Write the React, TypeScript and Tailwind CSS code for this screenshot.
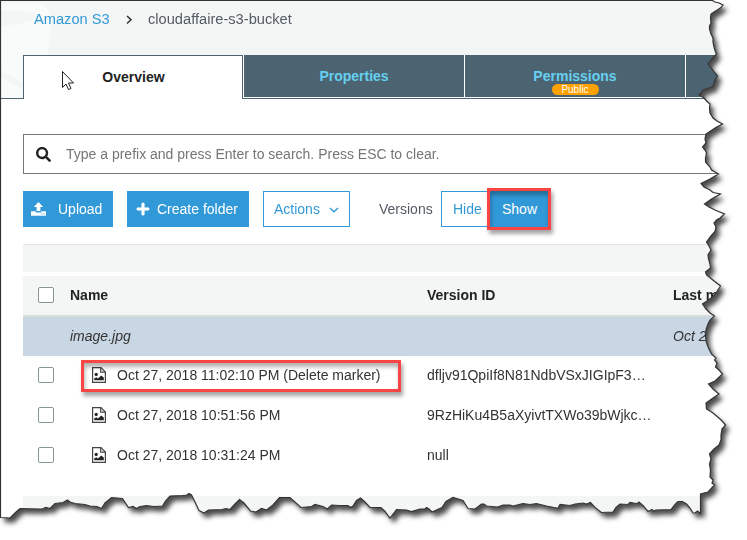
import React from 'react';
import { FaSearch, FaPlus } from 'react-icons/fa';

const OUTLINE =
  '0.5,0.5 712.5,0.5 715,2 719,3 723,5 721,7.5 718,9.5 714,12 711,14 710.5,18 711,23 709.5,26 709.5,29 711,34 713,38 713,42 714,47 715.5,52 716.5,54 712,59 708,64 712,69 715,73 717.5,76 715,80 714,84 712,87 703,90 701,93 699,95 704,98 706.5,101 710,104 709.5,108 710,113 713,118 717,121 722.5,124 715,128 706,134 705,139 706,143 702.5,147 705,150 706.5,153 705.5,158 705.5,162 710,167 711.5,170 718.5,174 710,179 701,183.5 704,187 710,190 713,192.5 720.5,194 711.5,199 704.5,204 709,207 715,210 724.5,214 720,218 716.5,220 714,223 716,227 715,231.5 711,236 706.5,242 709,246 711,250 708,255 708.5,259 710,264 710.5,268 705.5,272 706.5,275 714,281 720.5,286 716.5,292 712.5,297 707,301 702.5,304 706,309 710,313 714.5,316 710,320 708,324 706,330 705.5,335 706,341 708.5,348 711.5,354 716,358 714.5,360 717,363 715.5,367 719,370 722.5,374 715,381 708.5,384 713,389 719,394 713,398 706,403 706.5,409 713,413 720,419 723,422 725.5,425 722,429 721,435 721,440 719,445 714,449 709.5,454 711,459 709.5,464 710.5,470 710,477 713,480 712,483 714.5,485 708,492 700.5,494 700.5,513.5 697.5,511 695,513 693,513 690,508 686.5,504 682.5,501.5 678,501.5 675,504.5 671,509.5 655.5,510 654,511.5 652,509.5 648,511.5 643,505.5 639,502 638,503 636,503.5 630,502.5 628,504.5 620,504 616,507.5 613,512 601.5,512.5 595,507.5 590.5,502.5 586.5,504 583,503 575,504 570,505.5 560,504.5 558,508 556.5,508 546.5,506 536.5,503.5 530,504.5 523,503.5 513,506 510,505 503,505 497.5,507 486.5,506 484,504 481.5,504 475,509 468,508.5 463,500.5 460,499.5 453,497.5 446,501.5 442,507.5 432,512 429,509 426.5,507.5 425,509 420,509 411.5,511.5 406.5,510 396.5,509.5 390,518 385,511.5 381,507.5 370,507.5 365,502 360.5,498 356.5,500.5 353,506 350.5,507.5 348,505.5 340,505.5 331.5,505 327.5,509 323,506.5 315,504.5 311.5,506.5 301,507.5 290,497.5 279.5,497.5 273,505 266.5,510 261.5,508.5 256,512 250.5,511 244,503 239.5,499.5 235,504 230,509.5 226,508.5 222,509.5 208.5,510 204,513 199,510.5 195,502 191.5,495 189,493.5 187,495 183,495.5 170,496 165.5,501 162.5,506 154,506.5 146.5,505.5 140,506.5 136.5,508.5 133,506.5 128.5,507.5 122.5,498.5 111.5,497.5 105,503 101.5,508.5 97,506.5 90,506 85,504.5 75,503.5 70,502 67.5,500 63,502.5 55,503.5 50,508.5 46,507.5 42,509 20,508.5 15,513 10,518 0.5,517.5';

const CLIP = `polygon(${OUTLINE.split(' ')
  .map((p) => p.split(',').map((n) => `${n}px`).join(' '))
  .join(',')})`;

function Checkbox() {
  return <span className="block size-4 shrink-0 rounded-[2px] border border-[#879596] bg-white" />;
}

function ImageFileIcon() {
  return (
    <svg width="14" height="16" viewBox="0 0 14 16" className="shrink-0" fill="none">
      <path d="M0.6 0.6H9L13.4 5V15.4H0.6Z" fill="#fff" stroke="#444" strokeWidth="1.2" />
      <path d="M8.7 0.8V5.2H13.2" stroke="#444" strokeWidth="1.2" />
      <circle cx="4.2" cy="7.4" r="1.6" fill="#222" />
      <path d="M2.2 13.3V11.5L4.3 10.2L6 11.4L9.2 8.6L11.8 10.6V13.3Z" fill="#222" />
    </svg>
  );
}

function UploadIcon() {
  return (
    <svg width="15" height="14" viewBox="0 0 15 14" fill="#fff">
      <path d="M7.5 0L12.2 4.9H9.4V9H5.6V4.9H2.8Z" />
      <path fillRule="evenodd" d="M0.5 9.2H4.8V10.4H10.2V9.2H14.5Q15 9.2 15 9.8V13.3Q15 13.8 14.5 13.8H0.5Q0 13.8 0 13.3V9.8Q0 9.2 0.5 9.2ZM10.2 11.6V12.6H11.2V11.6ZM12.5 11.6V12.6H13.5V11.6Z" />
    </svg>
  );
}

function PlusIcon() {
  return <FaPlus size={14} className="shrink-0" stroke="#fff" strokeWidth={20} />;
}

const rows = [
  { date: 'Oct 27, 2018 11:02:10 PM (Delete marker)', id: 'dfljv91QpiIf8N81NdbVSxJIGIpF3…', marked: true },
  { date: 'Oct 27, 2018 10:51:56 PM', id: '9RzHiKu4B5aXyivtTXWo39bWjkc…', marked: false },
  { date: 'Oct 27, 2018 10:31:24 PM', id: 'null', marked: false },
];

const highlight =
  'pointer-events-none absolute border-[3px] border-[#fb4545] shadow-[2px_4px_4px_rgba(0,0,0,0.35),inset_1px_4px_4px_rgba(0,0,0,0.3)]';

export default function App() {
  return (
    <div className="relative h-[540px] w-[747px] overflow-hidden bg-white font-['Liberation_Sans',Arial,sans-serif] text-[14px] text-[#333]">
      <div className="h-full w-full drop-shadow-[4px_5px_2.5px_rgba(0,0,0,0.7)]">
        <div className="flex h-full w-full flex-col overflow-hidden bg-white" style={{ clipPath: CLIP }}>
          <header className="relative h-[99px] shrink-0 bg-[#f4f6f6]">
            <svg width="60" height="98" viewBox="0 0 60 98" className="absolute left-0 top-0">
              <path d="M0 3H42Q51 8 51 22L43 98H0Z" fill="#f9fafa" />
              <path d="M0 11Q26 9 40 15Q30 24 0 26Z" fill="#f4f6f6" />
              <path d="M0 70L24 84V90L0 77Z" fill="#f4f6f6" />
            </svg>
            <div className="relative flex h-[55px] items-start pl-[34px] pt-[9px] text-[14.65px] leading-5">
              <span className="w-[76px] whitespace-nowrap text-[#3199d8]">Amazon S3</span>
              <svg width="6" height="10" viewBox="0 0 6 10" className="ml-4 mt-[6px]" fill="none">
                <path d="M1 1L5 4.7L1 8.5" stroke="#333" strokeWidth="1.5" />
              </svg>
              <span className="ml-4 whitespace-nowrap text-[#545b64]">cloudaffaire-s3-bucket</span>
            </div>
            <div className="relative flex h-11 text-[14px] font-bold">
              <div className="w-[23px] border-b border-[#4c6472]" />
              <div className="flex w-[220px] justify-center border border-b-0 border-[#4c6472] bg-white pl-px pt-[11px] leading-5 text-[#222]">
                Overview
              </div>
              <div className="flex flex-1 gap-px border-b border-[#4c6472] bg-white pb-px pl-px leading-5 text-[#66d0f0]">
                <div className="flex w-[220px] justify-center bg-[#4c6472] pt-[11px]">Properties</div>
                <div className="flex w-[220px] flex-col items-center bg-[#4c6472] pt-[11px]">
                  <span>Permissions</span>
                  <span className="-mt-[2px] flex h-[11px] w-[47px] shrink-0 items-center justify-center rounded-full bg-[#ffa100] text-[10px] font-normal leading-none text-white">
                    Public
                  </span>
                </div>
                <div className="flex-1 bg-[#4c6472]" />
              </div>
            </div>
          </header>

          <main className="flex flex-1 flex-col pl-[23px] pt-[35px]">
            <div className="flex h-10 shrink-0 items-center border border-r-0 border-[#777] pl-3">
              <FaSearch size={15} color="#222" />
              <span className="ml-[15px] text-[14px] text-[#757575]">
                Type a prefix and press Enter to search. Press ESC to clear.
              </span>
            </div>

            <div className="mt-[17px] flex h-9 shrink-0 items-center text-[14px] text-white">
              <div className="flex h-9 w-[90px] items-center bg-[#3199d8] pl-2">
                <UploadIcon />
                <span className="ml-3">Upload</span>
              </div>
              <div className="ml-[14px] flex h-9 w-[122px] items-center whitespace-nowrap bg-[#3199d8] pl-[9px]">
                <PlusIcon />
                <span className="ml-[7px]">Create folder</span>
              </div>
              <div className="ml-[14px] flex h-9 w-[87px] items-center border border-[#3199d8] pl-[10px] text-[#3199d8]">
                <span>Actions</span>
                <svg width="10" height="6" viewBox="0 0 10 6" className="ml-[9px] mt-px" fill="none">
                  <path d="M1 1L5 4.8L9 1" stroke="#3199d8" strokeWidth="1.4" />
                </svg>
              </div>
              <span className="ml-[29px] w-[62px] text-[#545b64]">Versions</span>
              <div className="flex h-9 w-[49px] items-center border border-r-0 border-[#3199d8] pl-[11px] text-[#3199d8]">
                Hide
              </div>
              <div className="relative flex h-9 w-[59px] items-center justify-center bg-[#3199d8]">
                Show
                <span className={`${highlight} -left-[3px] -top-[3px] h-[42px] w-[64px]`} />
              </div>
            </div>

            <div className="mt-[17px] h-7 shrink-0 border-t border-[#dfe3e3] bg-[#f4f6f6]" />
            <div className="mt-1 flex h-[41px] shrink-0 items-center border-b-2 border-[#d9dcdc] bg-[#f4f6f6] pb-px pl-[15px] font-bold text-[#222]">
              <Checkbox />
              <span className="ml-4 w-[357px] shrink-0">Name</span>
              <span className="w-[246px] shrink-0">Version ID</span>
              <span className="shrink-0 whitespace-nowrap">Last modified</span>
            </div>
            <div className="flex h-[39px] shrink-0 items-center bg-[#c9d6e3] pl-[47px] italic">
              <span className="w-[603px] shrink-0">image.jpg</span>
              <span className="shrink-0 whitespace-nowrap">Oct 27, 2018</span>
            </div>
            {rows.map((row) => (
              <div key={row.id} className="relative flex h-10 shrink-0 items-center pb-[2px] pl-[15px]">
                <Checkbox />
                <div className="ml-[38px] flex w-[335px] items-center">
                  <ImageFileIcon />
                  <span className="ml-[11px] whitespace-nowrap">{row.date}</span>
                </div>
                <span className="whitespace-nowrap">{row.id}</span>
                {row.marked && <span className={`${highlight} left-[58px] top-[4px] h-8 w-80`} />}
              </div>
            ))}
            <div className="mt-5 flex-1 bg-[#f4f6f6]" />
          </main>
        </div>
      </div>

      <svg width="747" height="540" className="pointer-events-none absolute left-0 top-0" fill="none">
        <polygon points={OUTLINE} stroke="#333" strokeWidth="1.2" />
        <path
          d="M62.5 71.5V87.5L66 84L68.5 89.5L71 88.5L68.5 83H73.5Z"
          fill="#fff"
          stroke="#222"
          strokeWidth="1"
        />
      </svg>
    </div>
  );
}
